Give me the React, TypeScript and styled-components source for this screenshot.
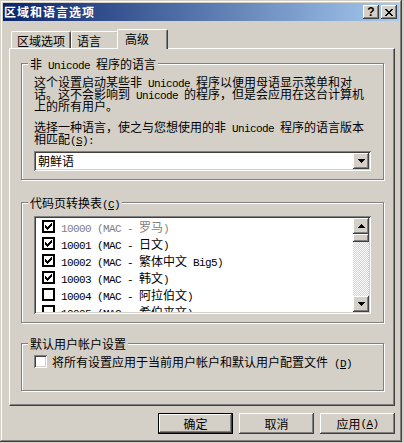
import styled, { createGlobalStyle, css } from 'styled-components'

const GlobalStyle = createGlobalStyle`
  html, body {
    margin: 0;
    padding: 0;
    background: #d4d0c8;
  }
  body {
    font-family: "Noto Sans CJK SC", "Noto Sans", sans-serif;
    font-size: 12px;
    color: #000;
  }
`

const raised = css`
  background: #d4d0c8;
  box-shadow: inset -1px -1px #404040, inset 1px 1px #ffffff, inset -2px -2px #808080, inset 2px 2px #d4d0c8;
`

const sunken = css`
  box-shadow: inset 1px 1px #808080, inset -1px -1px #ffffff, inset 2px 2px #404040, inset -2px -2px #d4d0c8;
`

// little pixel glyphs (triangles, check, close x)
const Triangle = ({ dir }: { dir: 'up' | 'down' }) => {
  const rows = [0, 1, 2, 3].map((i) => (dir === 'up' ? i : 3 - i))
  return (
    <svg width="7" height="4" viewBox="0 0 7 4" shapeRendering="crispEdges">
      {rows.map((r, i) => (
        <rect key={i} x={3 - i} y={r} width={i * 2 + 1} height="1" fill="#000" />
      ))}
    </svg>
  )
}

const CheckMark = () => (
  <svg width="7" height="7" viewBox="0 0 7 7" shapeRendering="crispEdges">
    {[2, 3, 4, 3, 2, 1, 0].map((y, x) => (
      <rect key={x} x={x} y={y} width="1" height="3" fill="#000" />
    ))}
  </svg>
)

const CloseGlyph = () => {
  const rows: [number, number][][] = [
    [[0, 2], [6, 2]],
    [[1, 2], [5, 2]],
    [[2, 4]],
    [[3, 2]],
    [[2, 4]],
    [[1, 2], [5, 2]],
    [[0, 2], [6, 2]],
  ]
  return (
    <svg width="8" height="7" viewBox="0 0 8 7" shapeRendering="crispEdges">
      {rows.map((segs, y) =>
        segs.map(([x, w], k) => <rect key={`${y}-${k}`} x={x} y={y} width={w} height="1" fill="#000" />)
      )}
    </svg>
  )
}

const Window = styled.div`
  width: 402px;
  height: 442px;
  box-sizing: border-box;
  padding: 3px;
  background: #d4d0c8;
  box-shadow: inset -1px -1px #404040, inset 1px 1px #d4d0c8, inset -2px -2px #808080, inset 2px 2px #ffffff;
  display: flex;
  flex-direction: column;
`

const TitleBar = styled.div`
  height: 18px;
  flex: none;
  display: flex;
  align-items: center;
  padding: 0 2px 0 1px;
  background: linear-gradient(to right, #0a246a, #a6caf0);
`

const Title = styled.div`
  flex: 1;
  color: #fff;
  font-weight: 700;
  letter-spacing: 1px;
  line-height: 18px;
  white-space: nowrap;
`

const CaptionButtons = styled.div`
  display: flex;
  gap: 2px;
`

const CaptionButton = styled.div`
  width: 16px;
  height: 14px;
  ${raised};
  display: flex;
  align-items: center;
  justify-content: center;
  font: bold 12px "Liberation Sans", Arial, sans-serif;
  line-height: 14px;
`

const Body = styled.div`
  padding: 8px 4px 0 6px;
  display: flex;
  flex-direction: column;
`

const TabRow = styled.div`
  display: flex;
  align-items: flex-end;
  height: 19px;
  padding-left: 2px;
`

const Tab = styled.div<{ $w: number; $active?: boolean }>`
  box-sizing: border-box;
  width: ${(p) => (p.$active ? p.$w + 4 : p.$w)}px;
  height: ${(p) => (p.$active ? 20 : 17)}px;
  border-top: 1px solid #fff;
  border-left: 1px solid #fff;
  border-right: 1px solid #404040;
  border-radius: 2px 2px 0 0;
  box-shadow: inset -1px 0 #808080;
  padding: 1px 0 0 ${(p) => (p.$active ? 7 : 5)}px;
  line-height: 15px;
  white-space: nowrap;
  background: #d4d0c8;
  ${(p) =>
    p.$active &&
    css`
      position: relative;
      z-index: 1;
      margin: 0 -2px -1px;
    `}
`

const TabPanel = styled.div`
  box-sizing: border-box;
  border: 1px solid;
  border-color: #fff #404040 #404040 #fff;
  box-shadow: inset -1px -1px #808080;
  padding: 8px 10px 14px 11px;
  display: flex;
  flex-direction: column;
`

const Group = styled.fieldset<{ $mt?: number; $pt: number; $pb: number }>`
  margin: ${(p) => p.$mt ?? 0}px 0 0;
  padding: ${(p) => p.$pt}px 12px ${(p) => p.$pb}px;
  min-width: 0;
  border: 1px solid #808080;
  box-shadow: inset 1px 1px #fff, 1px 1px #fff;
`

const Legend = styled.legend`
  padding: 0 2px;
  margin-left: -6px;
  line-height: 13px;
  height: 13px;
  background: #d4d0c8;
  white-space: nowrap;
`

// SimSun draws latin as a half-width mono; Liberation Mono squeezed to 6px a char
const Lat = styled.span`
  font-family: "Liberation Mono", "Courier New", monospace;
  font-size: 11px;
  letter-spacing: -0.6px;
  line-height: 0;
`

const Para = styled.p<{ $mt?: number }>`
  margin: ${(p) => p.$mt ?? 0}px 0 0;
  line-height: 12px;
  white-space: nowrap;
`

const Combo = styled.div`
  margin-top: 6px;
  height: 20px;
  box-sizing: border-box;
  padding: 2px;
  background: #fff;
  ${sunken};
  display: flex;
  align-items: center;
`

const ComboText = styled.div`
  flex: 1;
  padding-left: 2px;
  line-height: 16px;
`

const SmallButton = styled.div<{ $h?: number }>`
  width: 16px;
  height: ${(p) => p.$h ?? 16}px;
  flex: none;
  ${raised};
  display: flex;
  align-items: center;
  justify-content: center;
`

const ListBox = styled.div`
  height: 98px;
  box-sizing: border-box;
  padding: 2px;
  background: #fff;
  ${sunken};
  display: flex;
`

const ListItems = styled.div`
  flex: 1;
  overflow: hidden;
  display: flex;
  flex-direction: column;
`

const Row = styled.div<{ $dim?: boolean }>`
  height: 17px;
  flex: none;
  display: flex;
  align-items: center;
  gap: 6px;
  padding-left: 6px;
  color: ${(p) => (p.$dim ? '#808080' : '#000')};
  white-space: nowrap;
  line-height: 13px;
`

const FlatCheck = styled.div`
  width: 13px;
  height: 13px;
  box-sizing: border-box;
  border: 2px solid #000;
  background: #fff;
  flex: none;
  svg {
    display: block;
    margin: 1px;
  }
`

const ScrollBar = styled.div`
  width: 16px;
  display: flex;
  flex-direction: column;
`

const Track = styled.div`
  flex: 1;
  background: repeating-conic-gradient(#ffffff 0 25%, #d4d0c8 0 50%) 0 0 / 2px 2px;
`

const CheckRow = styled.div`
  display: flex;
  align-items: center;
  gap: 5px;
  height: 13px;
  line-height: 13px;
  white-space: nowrap;
`

const Check3D = styled.div`
  width: 13px;
  height: 13px;
  flex: none;
  background: #fff;
  ${sunken};
`

const ButtonRow = styled.div`
  display: flex;
  justify-content: flex-end;
  gap: 6px;
  margin-top: 7px;
`

const PushButton = styled.button<{ $default?: boolean }>`
  width: 75px;
  height: 21px;
  padding: 0;
  border: none;
  font: inherit;
  color: #000;
  line-height: 15px;
  display: flex;
  align-items: center;
  justify-content: center;
  ${raised};
  ${(p) =>
    p.$default &&
    css`
      box-shadow: inset 0 0 0 1px #000, inset -2px -2px #404040, inset 2px 2px #fff, inset -3px -3px #808080;
    `}
`

const codePages = [
  { id: '10000', name: '罗马', on: true, dim: true },
  { id: '10001', name: '日文', on: true },
  { id: '10002', name: '繁体中文', extra: ' Big5', on: true },
  { id: '10003', name: '韩文', on: true },
  { id: '10004', name: '阿拉伯文', on: false },
  { id: '10005', name: '希伯来文', on: false },
]

export default function App() {
  return (
    <>
      <GlobalStyle />
      <Window>
        <TitleBar>
          <Title>区域和语言选项</Title>
          <CaptionButtons>
            <CaptionButton>?</CaptionButton>
            <CaptionButton>
              <CloseGlyph />
            </CaptionButton>
          </CaptionButtons>
        </TitleBar>

        <Body>
          <TabRow>
            <Tab $w={60}>区域选项</Tab>
            <Tab $w={48}>语言</Tab>
            <Tab $w={47} $active>
              高级
            </Tab>
          </TabRow>

          <TabPanel>
            <Group $pt={6} $pb={8}>
              <Legend>
                非<Lat> Unicode </Lat>程序的语言
              </Legend>
              <Para>
                这个设置启动某些非<Lat> Unicode </Lat>程序以便用母语显示菜单和对
                <br />
                话。这不会影响到<Lat> Unicode </Lat>的程序，但是会应用在这台计算机
                <br />
                上的所有用户。
              </Para>
              <Para $mt={9}>
                选择一种语言，使之与您想使用的非<Lat> Unicode </Lat>程序的语言版本
                <br />
                相匹配<Lat>(<u>S</u>):</Lat>
              </Para>
              <Combo>
                <ComboText>朝鲜语</ComboText>
                <SmallButton>
                  <Triangle dir="down" />
                </SmallButton>
              </Combo>
            </Group>

            <Group $mt={16} $pt={7} $pb={8}>
              <Legend>
                代码页转换表<Lat>(<u>C</u>)</Lat>
              </Legend>
              <ListBox>
                <ListItems>
                  {codePages.map((c) => (
                    <Row key={c.id} $dim={c.dim}>
                      <FlatCheck>{c.on && <CheckMark />}</FlatCheck>
                      <span>
                        <Lat>{c.id} (MAC - </Lat>
                        {c.name}
                        <Lat>{c.extra ?? ''})</Lat>
                      </span>
                    </Row>
                  ))}
                </ListItems>
                <ScrollBar>
                  <SmallButton>
                    <Triangle dir="up" />
                  </SmallButton>
                  <SmallButton $h={8} />
                  <Track />
                  <SmallButton>
                    <Triangle dir="down" />
                  </SmallButton>
                </ScrollBar>
              </ListBox>
            </Group>

            <Group $mt={14} $pt={5} $pb={22}>
              <Legend>默认用户帐户设置</Legend>
              <CheckRow>
                <Check3D />
                <span>
                  将所有设置应用于当前用户帐户和默认用户配置文件<Lat> (<u>D</u>)</Lat>
                </span>
              </CheckRow>
            </Group>
          </TabPanel>

          <ButtonRow>
            <PushButton $default>确定</PushButton>
            <PushButton>取消</PushButton>
            <PushButton>
              应用<Lat>(<u>A</u>)</Lat>
            </PushButton>
          </ButtonRow>
        </Body>
      </Window>
    </>
  )
}
